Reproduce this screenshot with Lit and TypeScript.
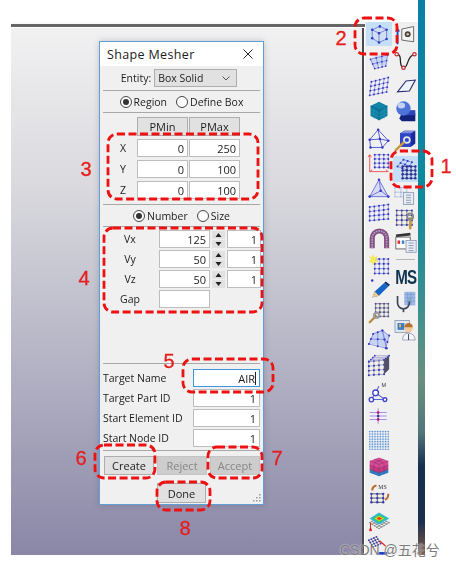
import { LitElement, html, css, svg } from "lit";
import { customElement } from "lit/decorators.js";

type P = [number, number];
const DOT = "#3436c4";
const LINE = "#7f84dc";

function mesh(a: P, b: P, c: P, d: P, nu: number, nv: number, r = 1.3, line = LINE, dot = DOT, sw = 0.9) {
  const at = (u: number, v: number): P => {
    const t = u / nu, s = v / nv;
    const x1 = a[0] + (b[0] - a[0]) * t, y1 = a[1] + (b[1] - a[1]) * t;
    const x2 = d[0] + (c[0] - d[0]) * t, y2 = d[1] + (c[1] - d[1]) * t;
    return [x1 + (x2 - x1) * s, y1 + (y2 - y1) * s];
  };
  const parts: unknown[] = [];
  for (let u = 0; u <= nu; u++) {
    const p = at(u, 0), q = at(u, nv);
    parts.push(svg`<line x1=${p[0]} y1=${p[1]} x2=${q[0]} y2=${q[1]} stroke=${line} stroke-width=${sw}></line>`);
  }
  for (let v = 0; v <= nv; v++) {
    const p = at(0, v), q = at(nu, v);
    parts.push(svg`<line x1=${p[0]} y1=${p[1]} x2=${q[0]} y2=${q[1]} stroke=${line} stroke-width=${sw}></line>`);
  }
  for (let u = 0; u <= nu; u++) for (let v = 0; v <= nv; v++) {
    const p = at(u, v);
    parts.push(svg`<circle cx=${p[0]} cy=${p[1]} r=${r} fill=${dot}></circle>`);
  }
  return parts;
}

const wrench = (x: number, y: number) => svg`
  <path d="M${x} ${y}l7-7" stroke="#b98a3c" stroke-width="2.600" stroke-linecap="round"></path>
  <circle cx=${x + 8} cy=${y - 8} r="3.200" fill="none" stroke="#9a9a9a" stroke-width="2"></circle>`;

const listDoc = (x: number, y: number) => svg`
  <rect x=${x} y=${y} width="12" height="14" fill="#e9eef6" stroke="#8c9ab5"></rect>
  <path d="M${x + 3} ${y + 3}h6M${x + 3} ${y + 6}h6M${x + 3} ${y + 9}h6M${x + 3} ${y + 12}h6" stroke="#7c8ba8"></path>`;

const S = (body: unknown) => html`<svg class="ic" viewBox="0 0 26 26">${body}</svg>`;

const left: { h: number; on?: boolean; i: unknown }[] = [
  { h: 24, on: true, i: S(svg`
    <path d="M5 8l9-4 8 4v11l-9 4-8-5z" fill="#cfe0f5" stroke="#6a78c8"></path>
    <path d="M5 8l8 4 9-4M13 12v11" fill="none" stroke="#6a78c8"></path>
    ${([[5, 8], [14, 4], [22, 8], [13, 12], [5, 18], [13, 23], [22, 19]] as P[]).map((p) => svg`<circle cx=${p[0]} cy=${p[1]} r="1.500" fill=${DOT}></circle>`)}`) },
  { h: 30, i: S(svg`<path d="M2 11q10-7 22-5l-2 13q-10-3-15 4z" fill="#c9d6f2"></path>${mesh([3, 11], [23, 6], [21, 19], [8, 22], 3, 2, 1)}`) },
  { h: 20, i: S(mesh([4, 8], [24, 3], [22, 20], [2, 24], 4, 3, 1.1)) },
  { h: 30, i: S(svg`
    <path d="M13 2l10 5v12l-10 5-10-5V7z" fill="#0f7fa3"></path>
    <path d="M3 7l10 5 10-5M13 12v12" fill="none" stroke="#0a6484"></path>
    <path d="M6 5.500l10 5M10 4l10 5M3 11l10 5 10-5M3 15l10 5 10-5M7 9v13M19 9v13" fill="none" stroke="#2a9abb" stroke-width=".6"></path>`) },
  { h: 26, i: S(svg`
    <path d="M12 2L24 15 17 23 3 23 2 14zM12 2l2 11-12 1M14 13l3 10M14 13l10 2" fill="none" stroke="#4e54d0" stroke-width="1.100"></path>
    ${([[12, 2], [24, 15], [17, 23], [3, 23], [2, 14], [14, 13]] as P[]).map((p) => svg`<circle cx=${p[0]} cy=${p[1]} r="1.500" fill=${DOT}></circle>`)}`) },
  { h: 24, i: S(svg`<path d="M2 2v20h22M2 22l3-2M24 22l-3-2M2 2l-2 3M2 2l2 3" fill="none" stroke="#e44" stroke-width="1"></path>${mesh([8, 2], [24, 2], [24, 17], [8, 17], 3, 3, 1.2)}`) },
  { h: 26, i: S(svg`
    <path d="M13 2l11 20H2z" fill="#d7dcf7" stroke="#5f64d8"></path>
    <path d="M13 2l2 13M2 22l13-7 9 7" fill="none" stroke="#5f64d8"></path>
    ${([[13, 2], [24, 22], [2, 22], [15, 15]] as P[]).map((p) => svg`<circle cx=${p[0]} cy=${p[1]} r="1.500" fill=${DOT}></circle>`)}`) },
  { h: 22, i: S(mesh([2, 6], [24, 3], [24, 20], [2, 22], 4, 3, 1.2)) },
  { h: 30, i: S(svg`
    <path d="M5 24V12a8.500 8.500 0 0 1 17 0v12" fill="none" stroke="#8a4c78" stroke-width="6"></path>
    <path d="M5 24V12a8.500 8.500 0 0 1 17 0v12" fill="none" stroke="#9ea3d6" stroke-width="2" stroke-dasharray="2 1"></path>`) },
  { h: 22, i: S(svg`${mesh([8, 6], [24, 6], [24, 23], [8, 23], 3, 3, 1.2)}
    <path d="M6 1l1.500 3.500L11 3 9 6.500 12 9l-4 .5L6 13 4.800 9.500 1 9l3-2.500L2 3l3 1.500z" fill="#f7ee55" stroke="#e9d93a" stroke-width=".5"></path>`) },
  { h: 26, i: S(svg`
    <circle cx="5" cy="3" r="1.500" fill=${DOT}></circle>
    <path d="M5 23l3-7L19 6l5 4-11 11z" fill="#1566c8"></path>
    <path d="M19 6l2-2 5 4-2 2z" fill="#12336e"></path><path d="M5 23l3-7 5 5z" fill="#f2c77e"></path>`) },
  { h: 22, i: S(svg`${mesh([9, 2], [24, 2], [24, 17], [9, 17], 3, 3, 1.1, "#666", "#4a4a9e")}${wrench(2, 24)}`) },
  { h: 30, i: S(svg`<path d="M6 6l11-4 8 7-4 15-9-4-11-1z" fill="#c6d3f2"></path>${mesh([6, 7], [17, 3], [22, 24], [1, 19], 2, 2, 1.2)}${mesh([17, 3], [25, 9], [21, 24], [22, 24], 1, 2, 1.2)}`) },
  { h: 22, i: S(svg`
    ${mesh([1, 9], [19, 7], [19, 24], [1, 25], 3, 3, 1.2, "#8f8f9f")}
    ${mesh([1, 9], [8, 2], [25, 2], [19, 7], 3, 1, 1, "#9a9ac8")}
    <path d="M19 7l6-5v16l-6 6z" fill="#50506a"></path>`) },
  { h: 32, i: S(svg`
    <path d="M9 14L4 22H20L9 14 13 6" fill="none" stroke="#5c5fd0" stroke-width="1.200"></path>
    <circle cx="9" cy="14" r="3.400" fill="#fff" stroke="#4144c8" stroke-width="1.600"></circle>
    <circle cx="4" cy="22" r="2.600" fill="#fff" stroke="#4144c8" stroke-width="1.600"></circle>
    <circle cx="20" cy="22" r="2.200" fill="#fff" stroke="#4144c8" stroke-width="1.600"></circle>
    <text x="16" y="7" font-family="Liberation Sans" font-size="6.500" fill="#333">M</text>`) },
  { h: 16, i: S(svg`
    <path d="M2 9h20M2 13h20M2 17h20" stroke="#a98ee8" stroke-width="1.200"></path>
    <path d="M12 4v18" stroke="#a070d0"></path>
    <circle cx="12" cy="9" r="1.600" fill="#b01f6f"></circle><circle cx="12" cy="13" r="1.600" fill="#3b2ea8"></circle><circle cx="12" cy="17" r="1.600" fill="#b01f6f"></circle>`) },
  { h: 32, i: S(svg`${mesh([2, 3], [24, 3], [24, 24], [2, 24], 7, 7, 0.8, "#9cc0e8", "#5b8ed4", 0.7)}`) },
  { h: 20, i: S(svg`
    <path d="M2 17l11-4 11 4v4l-11 4-11-4z" fill="#2c7fc6"></path>
    <path d="M2 12l11-4 11 4v5l-11 4-11-4z" fill="#c23a84"></path>
    <path d="M2 7l11-4 11 4v5l-11 4-11-4z" fill="#d44c96"></path>
    <path d="M2 7l11 4 11-4M13 11v14M7 5l11 4M18 5L7 9M2 12l11 4 11-4M2 17l11 4 11-4M7 10v12M19 10v12" fill="none" stroke="#7c2a60" stroke-width=".5"></path>`) },
  { h: 34, i: S(svg`
    ${mesh([4, 14], [18, 14], [18, 24], [4, 24], 2, 2, 1.400, "#333", "#3436c4")}
    <path d="M5 10q0-5 5-6" fill="none" stroke="#bb6a2a" stroke-width="2.400"></path>
    <path d="M24 14q0 6-4 7" fill="none" stroke="#bb6a2a" stroke-width="2.400"></path>
    <text x="12" y="8" font-family="Liberation Serif" font-size="7" fill="#333">MS</text>`) },
  { h: 22, i: S(svg`
    ${mesh([2, 15], [13, 9], [25, 15], [13, 22], 4, 4, 0.8, "#888", "#888")}
    <path d="M2 10L13 3l12 7-12 7z" fill="#2fb4e8"></path>
    <path d="M5 10l8-5 9 5-9 5z" fill="#34d058"></path>
    <path d="M8 10l5-3 6 3-6 3z" fill="#f2e12a"></path>
    <path d="M10 10l3-2 4 2-4 2z" fill="#f03a20"></path>
    <path d="M3 15v9" stroke="#d22" stroke-width="1.200"></path><rect x="1.500" y="22" width="3" height="3" fill="#d22"></rect>`) },
  { h: 30, i: S(svg`
    ${mesh([1, 5], [10, 1], [15, 9], [6, 13], 3, 3, 1.100, "#999", "#3a3aa8")}
    <path d="M14 6l7 6" stroke="#e22" stroke-width="1.500"></path>
    <rect x="12" y="19" width="11" height="3" fill="#1238c0"></rect>`) },
];

const right: { h?: number; sep?: boolean; on?: boolean; i?: unknown }[] = [
  { h: 26, i: S(svg`
    <path d="M8 6l14-3v18L8 19z" fill="#f3f3f3" stroke="#555"></path>
    <path d="M3 24V7" stroke="#1c43c8" stroke-width="2.200"></path><path d="M0 9l3-5 3 5z" fill="#1c43c8"></path>
    <circle cx="15" cy="12" r="3.500" fill="#444"></circle><circle cx="15" cy="12" r="1.500" fill="#e8c08a"></circle>`) },
  { h: 26, i: S(svg`
    <path d="M2 5c8 0 1 14 8 16 6 1 3-13 13-16" fill="none" stroke="#222" stroke-width="1.500"></path>
    ${([[2, 5], [10, 21], [23, 5]] as P[]).map((p) => svg`<circle cx=${p[0]} cy=${p[1]} r="2" fill="#f5f5f5" stroke="#c2272d" stroke-width="1.400"></circle>`)}`) },
  { h: 24, i: S(svg`<path d="M3 20L13 7l11-1-7 13z" fill="#eef2fb" stroke="#2a2f6e" stroke-width="1.300"></path>`) },
  { h: 26, i: S(svg`
    <path d="M8 16h16v9H8l-3-3z" fill="#14227e"></path>
    <path d="M12 12h12v6H12z" fill="#2e44b8"></path>
    <circle cx="10" cy="10" r="8.500" fill="#4d72d8"></circle>
    <ellipse cx="7.500" cy="6.500" rx="4.500" ry="3.500" fill="#c3d1f3"></ellipse>`) },
  { h: 32, i: S(svg`
    <path d="M6 5l5-3h13v15l-5 4H6z" fill="#1c2a9c"></path>
    <path d="M6 5h13v16H6z" fill="#2d47c8"></path><path d="M6 5l5-3h13l-5 3z" fill="#7c90de"></path>
    <circle cx="14" cy="13" r="3.500" fill="none" stroke="#e6e6e6" stroke-width="2"></circle>
    <path d="M1 25l9-9" stroke="#c99a3d" stroke-width="3" stroke-linecap="round"></path>`) },
  { h: 26, on: true, i: S(svg`
    ${mesh([3, 10], [10, 2], [20, 5], [14, 14], 2, 2, 1.200, "#7c80d8", "#3436c4")}
    ${mesh([9, 10], [24, 10], [24, 24], [9, 24], 3, 3, 1.500, "#33337a", "#2f3190")}`) },
  { h: 28, i: S(svg`${mesh([0, 3], [14, 3], [14, 14], [0, 14], 2, 2, 0.6, "#a4b8e8", "#7fa0e0")}${listDoc(10, 9)}`) },
  { h: 18, i: S(svg`${mesh([2, 3], [20, 3], [20, 20], [2, 20], 3, 3, 1.200, "#666", "#3436c4")}
    <path d="M18 24V12" stroke="#c99a3d" stroke-width="3" stroke-linecap="round"></path>
    <circle cx="18" cy="10" r="3.500" fill="none" stroke="#8a8a8a" stroke-width="2.200"></circle>`) },
  { h: 30, i: S(svg`
    <rect x="1" y="6" width="17" height="14" fill="#ffffff" stroke="#555"></rect>
    <path d="M1 3l17-2 .5 3-17 2z" fill="#333"></path>
    <rect x="3" y="10" width="3" height="4" fill="#d33"></rect><rect x="8" y="10" width="3" height="4" fill="#38c"></rect><rect x="13" y="10" width="3" height="4" fill="#e9a"></rect>
    ${listDoc(13, 10)}`) },
  { sep: true },
  { h: 32, i: html`<span class="ms">MS</span>` },
  { h: 18, i: S(svg`
    <rect x="11" y="1" width="13" height="16" fill="#9db8e8"></rect>
    <path d="M11 4h13M11 8h13M11 12h13M15 1v16M19 1v16" stroke="#6f8fc8" stroke-width=".6"></path>
    <path d="M3 6v8a7 7 0 0 0 14 0v-2" fill="none" stroke="#3f4658" stroke-width="2"></path>
    <path d="M10 21v4" stroke="#3f4658" stroke-width="2"></path>
    <circle cx="17" cy="10" r="2.200" fill="#7fb0c0"></circle>`) },
  { h: 36, i: S(svg`
    <rect x="0" y="3" width="17" height="14" fill="#dfe8f6" stroke="#8d99ad"></rect>
    <rect x="3" y="6" width="8" height="8" fill="#3a7cc8"></rect><rect x="5" y="7" width="2" height="4" fill="#f3c33a"></rect>
    <circle cx="16" cy="12" r="5" fill="#f2c9a1"></circle><path d="M11 11a5 5 0 0 1 10 0z" fill="#b8732b"></path>
    <path d="M9 26q0-8 7-8t8 8z" fill="#f3f6fb" stroke="#99a"></path><path d="M16 19v7" stroke="#225"></path>`) },
];

@customElement("app-root")
export class AppRoot extends LitElement {
  static styles = css`
    :host { display: block; width: 456px; height: 567px; background: #fff; position: relative; overflow: hidden;
      font-family: "Open Sans", "Liberation Sans", sans-serif; font-size: 10.500px; color: #1c1c1c; }
    .shell { display: flex; height: 555px; margin-left: 11px; width: 414px; filter: blur(0.35px); }
    .workspace { flex: 1; display: flex; flex-direction: column; padding-top: 22px; min-width: 0; }
    .topbar { height: 6px; flex: none; background: linear-gradient(#fafafa 0 2px, #666 2px 5px, #fff 5px); }
    .under { flex: 1; display: flex; min-height: 0; }
    .viewport { flex: 1; background: linear-gradient(180deg, #f1f1f2 0%, #d9d9de 30%, #b6b5c6 62%, #8a87a7 100%); }
    .divider { width: 2px; flex: none; background: #4a4a4a; border-right: 1px solid #fff; }
    .strip { width: 7px; flex: none; background: linear-gradient(180deg, #0b7ea6 0%, #0d8a9e 35%, #3d8f90 55%, #6b8f80 68%, #53747a 78%, #16304f 84%, #1b2f4e 94%, #7f5a45 100%); }
    .tools { width: 53px; flex: none; margin-top: -6px; background: #f0f0f0; display: flex; overflow: hidden; padding-left: 1px; box-sizing: border-box; }
    .col { display: flex; flex-direction: column; flex: none; }
    .col.a { width: 26px; margin-right: 1px; }
    .col.b { width: 25px; }
    .cell { display: flex; align-items: center; justify-content: center; flex: none; }
    .cell.on { background: #c4dff6; }
    .ic { flex: none; width: 22px; height: 22px; overflow: visible; }
    .tsep { height: 1px; margin: 1px 3px 1px; background: #b5b5b5; flex: none; }
    .ms { font-family: "Liberation Sans", sans-serif; font-weight: 700; font-size: 21px; color: #10344f; transform: scaleX(.72); letter-spacing: -1px; }

    .dlg { position: absolute; left: 99px; top: 41px; width: 165px; height: 464px; box-sizing: border-box; padding-bottom: 1px;
      border: 1px solid #5e9fd8; background: #f0f0f0; display: flex; flex-direction: column; filter: blur(0.35px);
      box-shadow: 0 0 6px rgba(60,60,80,.25); }
    .title { height: 24px; flex: none; background: #fff; display: flex; align-items: center; justify-content: space-between; padding: 0 10px 0 7px; font-size: 12.500px; letter-spacing: .35px; }
    .row { display: flex; align-items: center; justify-content: center; flex: none; }
    .entity { height: 24px; gap: 3px; padding-right: 5px; }
    .select { width: 83px; height: 18px; box-sizing: border-box; background: #e1e1e1; border: 1px solid #adadad; display: flex; align-items: center; justify-content: space-between; padding: 0 6px 0 3px; }
    .sep { height: 1px; margin: 0 3px; background: #a8a8a8; flex: none; }
    .radios { height: 21px; gap: 2px; }
    .radio { width: 10px; height: 10px; border: 1px solid #444; border-radius: 50%; background: #fff; display: flex; align-items: center; justify-content: center; flex: none; }
    .radio.on::after { content: ""; width: 6px; height: 6px; border-radius: 50%; background: #333; }
    .radio.next { margin-left: 7px; }
    .boxgrid { display: grid; grid-template-columns: 26px 51px 51px; gap: 3px 1px; padding: 4px 0 5px 10px; flex: none; }
    .lab { display: flex; align-items: center; justify-content: center; }
    .field { height: 18px; box-sizing: border-box; background: #fff; border: 1px solid #8c8c8c; outline: .5px solid #bdbdbd; outline-offset: -1.500px;
      display: flex; align-items: center; justify-content: flex-end; padding-right: 3px; font-size: 11px; }
    .field.focus { border-color: #3d96dc; outline: none; }
    .caret { width: 1px; height: 13px; background: #222; }
    .btn { height: 19px; box-sizing: border-box; background: #e1e1e1; border: 1px solid #adadad; display: flex; align-items: center; justify-content: center; font-size: 11px; }
    .btn.off { background: #cdcdcd; border-color: #c4c4c4; color: #868686; }
    .meshgrid { display: grid; grid-template-columns: 54px 51px 13px 34px; column-gap: 2px; row-gap: 2px; padding: 3px 0 0 3px; flex: none; }
    .spin { display: flex; flex-direction: column; justify-content: center; gap: 1px; }
    .spin svg { display: block; background: #e1e1e1; }
    .grow { flex: 1; }
    .ids { display: grid; grid-template-columns: 90px 67px; row-gap: 2px; padding: 5px 0 0 3px; flex: none; }
    .ids .lab { justify-content: flex-start; white-space: nowrap; }
    .sep.low { margin-top: 3px; }
    .actions { display: flex; gap: 3px; padding: 5px 0 0 4px; flex: none; }
    .actions .btn { width: 50px; }
    .done { display: flex; justify-content: center; padding: 8px 0 0 0; flex: none; }
    .done .btn { width: 49px; height: 20px; }
    .grip { position: absolute; right: 2px; bottom: 2px; }

    .mark { position: absolute; overflow: visible; fill: none; stroke: #ee1111; stroke-width: 2.800; stroke-dasharray: 8 3.500; }
    .n { position: absolute; color: #e81c1c; font-family: "Liberation Sans", sans-serif; font-size: 20px; line-height: 20px; transform: translate(-50%, -50%); -webkit-text-stroke: .3px #e81c1c; }
    .wm { position: absolute; left: 340px; top: 541px; color: #7d7d7d; font-size: 14px; line-height: 18px; white-space: nowrap;
      font-family: "Liberation Sans", "Noto Sans CJK SC", sans-serif; text-shadow: 0 0 2px rgba(255,255,255,.9); }
  `;

  private num(v: string) { return html`<div class="field">${v}</div>`; }
  private spin() {
    return html`<div class="spin">
      <svg width="13" height="8" viewBox="0 0 13 8"><path d="M6.500 2l3 4h-6z" fill="#222"></path></svg>
      <svg width="13" height="8" viewBox="0 0 13 8"><path d="M6.500 6l3-4h-6z" fill="#222"></path></svg>
    </div>`;
  }

  render() {
    const marks = [
      [390, 150, 43, 38], [354, 17, 44, 38], [107, 133, 152, 67], [103, 227, 160, 86],
      [182, 358, 92, 35], [94, 444, 62, 35], [207, 446, 56, 33], [156, 481, 55, 30],
    ];
    const nums: [string, number, number][] = [
      ["1", 446, 166], ["2", 341, 38], ["3", 86, 169], ["4", 84, 278],
      ["5", 169, 361], ["6", 81, 458], ["7", 277, 458], ["8", 185, 528],
    ];
    return html`
      <div class="shell">
        <div class="workspace">
          <div class="topbar"></div>
          <div class="under">
            <div class="viewport"></div>
            <div class="divider"></div>
            <div class="tools">
              <div class="col a">
                ${left.map((c) => html`<div class="cell ${c.on ? "on" : ""}" style="height:${c.h}px">${c.i}</div>`)}
              </div>
              <div class="col b">
                ${right.map((c) => c.sep
                  ? html`<div class="tsep"></div>`
                  : html`<div class="cell ${c.on ? "on" : ""}" style="height:${c.h}px">${c.i}</div>`)}
              </div>
            </div>
          </div>
        </div>
        <div class="strip"></div>
      </div>

      <div class="dlg">
        <div class="title">
          <span>Shape Mesher</span>
          <svg width="10" height="10" viewBox="0 0 10 10"><path d="M.5.5l9 9M9.500.5l-9 9" stroke="#222" stroke-width="1"></path></svg>
        </div>
        <div class="row entity">
          <span>Entity:</span>
          <div class="select"><span>Box Solid</span>
            <svg width="8" height="5" viewBox="0 0 8 5"><path d="M.5.5L4 4 7.500.5" fill="none" stroke="#555"></path></svg>
          </div>
        </div>
        <div class="sep"></div>
        <div class="row radios">
          <span class="radio on"></span><span>Region</span>
          <span class="radio next"></span><span>Define Box</span>
        </div>
        <div class="sep"></div>
        <div class="boxgrid">
          <span></span><div class="btn">PMin</div><div class="btn">PMax</div>
          <span class="lab">X</span>${this.num("0")}${this.num("250")}
          <span class="lab">Y</span>${this.num("0")}${this.num("100")}
          <span class="lab">Z</span>${this.num("0")}${this.num("100")}
        </div>
        <div class="sep"></div>
        <div class="row radios">
          <span class="radio on"></span><span>Number</span>
          <span class="radio next"></span><span>Size</span>
        </div>
        <div class="sep"></div>
        <div class="meshgrid">
          <span class="lab">Vx</span>${this.num("125")}${this.spin()}${this.num("1")}
          <span class="lab">Vy</span>${this.num("50")}${this.spin()}${this.num("1")}
          <span class="lab">Vz</span>${this.num("50")}${this.spin()}${this.num("1")}
          <span class="lab">Gap</span>${this.num("")}
        </div>
        <div class="grow"></div>
        <div class="sep"></div>
        <div class="ids">
          <span class="lab">Target Name</span><div class="field focus">AIR<span class="caret"></span></div>
          <span class="lab">Target Part ID</span>${this.num("1")}
          <span class="lab">Start Element ID</span>${this.num("1")}
          <span class="lab">Start Node ID</span>${this.num("1")}
        </div>
        <div class="sep low"></div>
        <div class="actions">
          <div class="btn">Create</div>
          <div class="btn off">Reject</div>
          <div class="btn off">Accept</div>
        </div>
        <div class="done"><div class="btn">Done</div></div>
        <svg class="grip" width="9" height="9" viewBox="0 0 9 9" fill="#9a9a9a">
          <rect x="7" y="1" width="1.500" height="1.500"></rect><rect x="4" y="4" width="1.500" height="1.500"></rect><rect x="7" y="4" width="1.500" height="1.500"></rect>
          <rect x="1" y="7" width="1.500" height="1.500"></rect><rect x="4" y="7" width="1.500" height="1.500"></rect><rect x="7" y="7" width="1.500" height="1.500"></rect>
        </svg>
      </div>

      ${marks.map((m) => html`<svg class="mark" style="left:${m[0]}px;top:${m[1]}px" width=${m[2]} height=${m[3]}><rect x="1" y="1" width=${m[2] - 2} height=${m[3] - 2} rx="9"></rect></svg>`)}
      ${nums.map((n) => html`<div class="n" style="left:${n[1]}px;top:${n[2]}px">${n[0]}</div>`)}
      <div class="wm">CSDN @五花兮</div>
    `;
  }
}
